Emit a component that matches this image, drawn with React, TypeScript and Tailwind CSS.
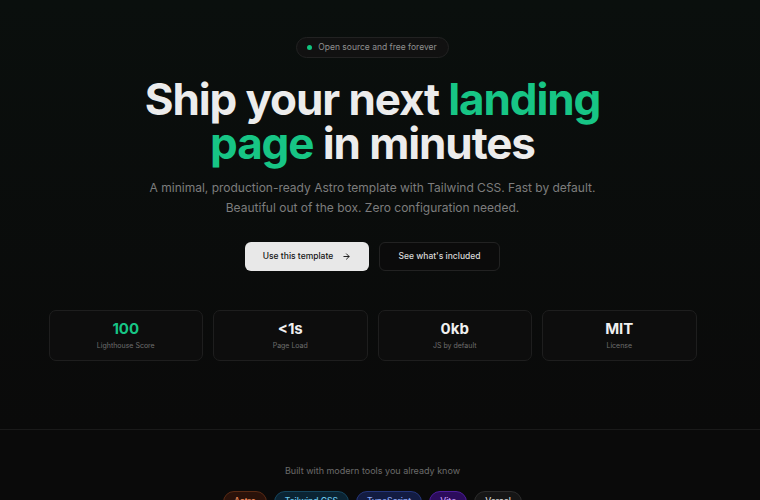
import { ArrowRight } from "lucide-react";

const stats = [
  { value: "100", label: "Lighthouse Score", accent: true },
  { value: "<1s", label: "Page Load" },
  { value: "0kb", label: "JS by default" },
  { value: "MIT", label: "License" },
];

const tools = [
  { name: "Astro", cls: "bg-[#2a120a] border-[#5a2a14] text-[#f08a5a]" },
  { name: "Tailwind CSS", cls: "bg-[#0b2433] border-[#15465e] text-[#6cc6ea]" },
  { name: "TypeScript", cls: "bg-[#131c42] border-[#24357a] text-[#8aa4f0]" },
  { name: "Vite", cls: "bg-[#2c0c5c] border-[#4c1c9a] text-[#c49af8]" },
  { name: "Vercel", cls: "bg-[#161616] border-[#2c2c2c] text-[#d8d8d8]" },
];

export default function App() {
  return (
    <div
      className="min-h-[640px] w-full bg-[#0a0a0a] text-white"
      style={{ fontFamily: "Inter, 'Noto Sans', sans-serif" }}
    >
      {/* hero */}
      <section className="bg-gradient-to-b from-[#0a0f0d] to-[#0a0a0a] pt-[37px] pb-[68px] border-b border-[#1a1a1a]">
        <div className="flex flex-col items-center pr-[15px]">
          <div className="flex items-center gap-[6px] rounded-full border border-[#222] bg-[#111] pl-[10px] pr-[11px] h-[21px] text-[8.5px] text-[#8f8f8f]">
            <span className="h-[5px] w-[5px] rounded-full bg-[#10c47e]" />
            Open source and free forever
          </div>

          <h1 className="mt-[19px] text-center text-[44px] font-bold leading-[44px] tracking-[-0.025em] text-[#ececec]">
            Ship your next <span className="text-[#17c585]">landing</span>
            <br />
            <span className="text-[#17c585]">page</span> in minutes
          </h1>

          <p className="mt-[13px] text-center text-[12px] leading-[20px] text-[#7d7d7d]">
            A minimal, production-ready Astro template with Tailwind CSS. Fast by default.
            <br />
            Beautiful out of the box. Zero configuration needed.
          </p>

          <div className="mt-[24px] flex gap-[10px]">
            <button className="flex h-[29px] w-[124px] items-center justify-center gap-[9px] rounded-[6px] bg-[#e8e8e8] text-[8.5px] font-medium text-[#151515]">
              Use this template
              <ArrowRight size={9} strokeWidth={2.5} />
            </button>
            <button className="flex h-[29px] w-[121px] items-center justify-center rounded-[6px] border border-[#222] bg-[#0b0b0b] text-[8.5px] font-medium text-[#d8d8d8]">
              See what&apos;s included
            </button>
          </div>

          <div className="mt-[39px] grid w-[648px] grid-cols-4 gap-[10px]">
            {stats.map((s) => (
              <div
                key={s.label}
                className="flex h-[51px] flex-col items-center justify-center rounded-[7px] border border-[#1e1e1e] bg-[#0d0d0d]"
              >
                <div className={`text-[15px] font-bold leading-[18px] ${s.accent ? "text-[#17c585]" : "text-[#f0f0f0]"}`}>
                  {s.value}
                </div>
                <div className="mt-[3px] text-[7px] text-[#6e6e6e]">{s.label}</div>
              </div>
            ))}
          </div>
        </div>
      </section>

      {/* tools */}
      <section className="flex flex-col items-center pt-[34px] pb-[60px] pr-[15px]">
        <p className="text-[9px] text-[#6a6a6a]">Built with modern tools you already know</p>
        <div className="mt-[13px] flex gap-[7px]">
          {tools.map((t) => (
            <span
              key={t.name}
              className={`flex h-[22px] items-center rounded-full border px-[10px] text-[8.5px] font-medium ${t.cls}`}
            >
              {t.name}
            </span>
          ))}
        </div>
      </section>
    </div>
  );
}
